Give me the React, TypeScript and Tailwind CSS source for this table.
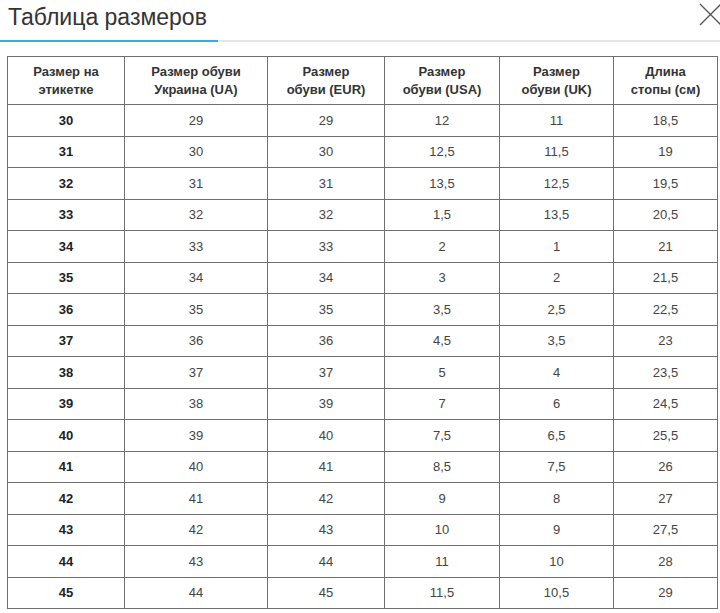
import React from 'react'

const headers = [
  ['Размер на', 'этикетке'],
  ['Размер обуви', 'Украина (UA)'],
  ['Размер', 'обуви (EUR)'],
  ['Размер', 'обуви (USA)'],
  ['Размер', 'обуви (UK)'],
  ['Длина', 'стопы (см)'],
]

const rows = [
  ['30', '29', '29', '12', '11', '18,5'],
  ['31', '30', '30', '12,5', '11,5', '19'],
  ['32', '31', '31', '13,5', '12,5', '19,5'],
  ['33', '32', '32', '1,5', '13,5', '20,5'],
  ['34', '33', '33', '2', '1', '21'],
  ['35', '34', '34', '3', '2', '21,5'],
  ['36', '35', '35', '3,5', '2,5', '22,5'],
  ['37', '36', '36', '4,5', '3,5', '23'],
  ['38', '37', '37', '5', '4', '23,5'],
  ['39', '38', '39', '7', '6', '24,5'],
  ['40', '39', '40', '7,5', '6,5', '25,5'],
  ['41', '40', '41', '8,5', '7,5', '26'],
  ['42', '41', '42', '9', '8', '27'],
  ['43', '42', '43', '10', '9', '27,5'],
  ['44', '43', '44', '11', '10', '28'],
  ['45', '44', '45', '11,5', '10,5', '29'],
]

const widths = ['w-[117px]', 'w-[143px]', 'w-[117px]', 'w-[115px]', 'w-[114px]', 'w-[104px]']

export default function App() {
  return (
    <div className="w-[720px] h-[613px] bg-white overflow-hidden font-['Liberation_Sans',Arial,sans-serif]">
      {/* Header */}
      <div className="relative h-[40px]">
        <h2 className="pl-[8px] pt-[3px] text-[23px] leading-[28px] text-[#333] font-normal">
          Таблица размеров
        </h2>
        <svg className="absolute right-[-2px] top-[3px]" width="23" height="23" viewBox="0 0 23 23">
          <path d="M1 1L22 22M22 1L1 22" stroke="#555" strokeWidth="1.3" fill="none" />
        </svg>
      </div>
      <div className="flex h-[2px]">
        <div className="w-[218px] bg-[#3aa9de]" />
        <div className="flex-1 bg-[#e6e6e6]" />
      </div>

      {/* Table */}
      <div className="pt-[14px] pl-[7px]">
        <table className="border-collapse table-fixed w-[710px] text-[13px] text-[#333]">
          <thead>
            <tr className="h-[48px]">
              {headers.map((h, i) => (
                <th
                  key={i}
                  className={`${widths[i]} border border-[#707070] font-bold leading-[18px] text-center align-middle p-0`}
                >
                  {h[0]}
                  <br />
                  {h[1]}
                </th>
              ))}
            </tr>
          </thead>
          <tbody>
            {rows.map((r) => (
              <tr key={r[0]} className="h-[31.5px]">
                {r.map((c, i) => (
                  <td
                    key={i}
                    className={`border border-[#707070] text-center align-middle p-0 ${
                      i === 0 ? 'font-bold text-[#222]' : 'text-[#444]'
                    }`}
                  >
                    {c}
                  </td>
                ))}
              </tr>
            ))}
          </tbody>
        </table>
      </div>
    </div>
  )
}
